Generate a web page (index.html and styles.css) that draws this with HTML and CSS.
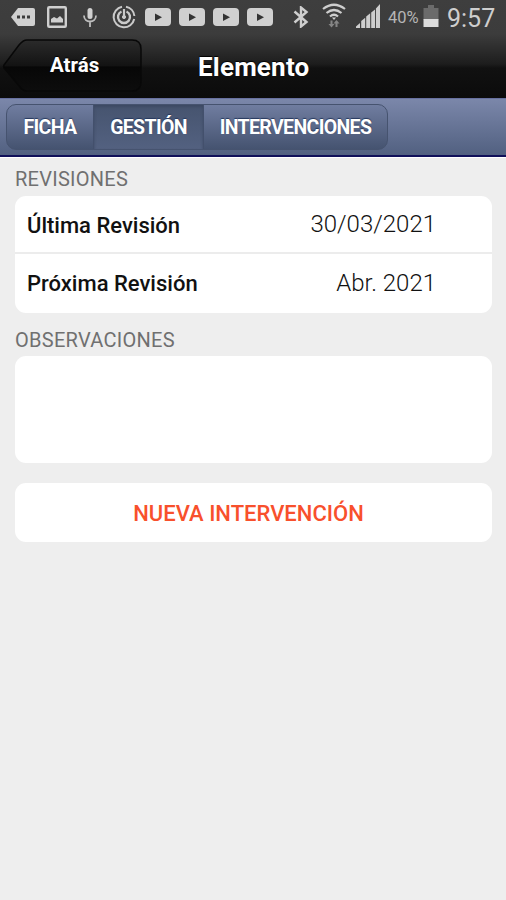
FILE: index.html
```html
<!DOCTYPE html>
<html lang="es">
  <head>
    <meta charset="utf-8">
    <title>Elemento</title>
    <link rel="stylesheet" href="styles.css">
  </head>
  <body>
    <header class="top">
      <div class="status-bar">
        <svg class="icon-more" width="24" height="18" viewBox="0 0 24 18">
          <path d="M7 0h15q2 0 2 2v14q0 2-2 2H7L0 9z" fill="#d0d0d0"/>
          <path d="M6 7.5h3v3H6zM11 7.5h3v3h-3zM16 7.5h3v3h-3z" fill="#3c3c3c"/>
        </svg>
        <svg class="icon-image" width="20" height="22" viewBox="0 0 20 22">
          <rect x="1.2" y="1.2" width="17.6" height="19.6" rx="1" fill="none" stroke="#cfcfcf" stroke-width="2.4"/>
          <path d="M4 16.5V13l3-2 3 1.5 3-2.500 3 3v3.500z" fill="#cfcfcf"/>
        </svg>
        <svg class="icon-mic" width="14" height="19" viewBox="0 0 14 19">
          <rect x="4.5" y="0" width="5" height="11" rx="2.5" fill="#d0d0d0"/>
          <path d="M1 7.5c0 8 12 8 12 0M7 13.5V19" fill="none" stroke="#bdbdbd" stroke-width="1.8"/>
        </svg>
        <svg class="icon-ring" width="24" height="24" viewBox="0 0 24 24" fill="none" stroke="#cacaca">
          <path d="M10 1.7A10.4 10.4 0 1 0 22.2 14M22.4 11A10.4 10.4 0 0 0 14 1.7" stroke-width="2"/>
          <path d="M9.5 6.5a6 6 0 1 0 5 0" stroke-width="2.4"/>
          <path d="M12 4v8" stroke-width="2.2"/>
          <circle cx="12" cy="12" r="1.6" fill="#cacaca"/>
        </svg>
        <svg class="icon-video first" width="26" height="18" viewBox="0 0 26 18">
          <rect width="26" height="18" rx="4" fill="#d0d0d0"/><path d="M10 5.5l7 3.7-7 3.7z" fill="#333"/>
        </svg>
        <svg class="icon-video" width="26" height="18" viewBox="0 0 26 18">
          <rect width="26" height="18" rx="4" fill="#d0d0d0"/><path d="M10 5.5l7 3.7-7 3.7z" fill="#333"/>
        </svg>
        <svg class="icon-video" width="26" height="18" viewBox="0 0 26 18">
          <rect width="26" height="18" rx="4" fill="#d0d0d0"/><path d="M10 5.5l7 3.7-7 3.7z" fill="#333"/>
        </svg>
        <svg class="icon-video" width="26" height="18" viewBox="0 0 26 18">
          <rect width="26" height="18" rx="4" fill="#d0d0d0"/><path d="M10 5.5l7 3.7-7 3.7z" fill="#333"/>
        </svg>
        <svg class="icon-bluetooth" width="16" height="22" viewBox="0 0 16 22">
          <path d="M1.5 5.5l12 10.5L8 20.5v-19L13.5 6l-12 10.5" fill="none" stroke="#cecece" stroke-width="2.4"/>
        </svg>
        <svg class="icon-wifi" width="24" height="25" viewBox="0 0 24 25">
          <path d="M1 6q11-8.500 22 0M4.500 10q7.500-6 15 0M8 13.500q4-3.500 8 0" fill="none" stroke="#cecece" stroke-width="2.2"/>
          <path d="M10 14.500h4l-2 2.500z" fill="#cecece"/>
          <path d="M9.500 17.500V22M14.500 24v-5.500" fill="none" stroke="#858585" stroke-width="2"/>
          <path d="M6.500 21h6l-3 3.500zM11.500 20.500h6l-3-3.500z" fill="#858585"/>
        </svg>
        <svg class="icon-signal" width="24" height="24" viewBox="0 0 24 24" fill="#cecece">
          <path d="M0 24v-1.500l4-3.500v5zM5.200 24v-7l4-3.200V24zM10.200 24V12.500l4-3.200V24zM15.200 24V8.500l3.800-3V24zM19.900 24V4.500L24 0v24z"/>
        </svg>
        <span class="battery-level">40%</span>
        <svg class="icon-battery" width="16" height="22" viewBox="0 0 16 22">
          <path d="M.5 3H5V0h6v3h4.500v12H.5z" fill="#6b6b6b"/>
          <path d="M.5 14h15v8H.5z" fill="#dcdcdc"/>
        </svg>
        <span class="clock">9:57</span>
      </div>
      <nav class="title-bar">
        <a class="back">
          <svg class="back-shape" width="140" height="54" viewBox="0 0 140 54">
            <defs>
              <linearGradient id="back-fill" x1="0" y1="0" x2="0" y2="1">
                <stop offset="0" stop-color="#2b2b2b"/>
                <stop offset=".5" stop-color="#131313"/>
                <stop offset=".53" stop-color="#070707"/>
                <stop offset="1" stop-color="#0d0d0d"/>
              </linearGradient>
            </defs>
            <path d="M25 1h105q9 0 9 9v33q0 9-9 9H25q-4 0-7-4L2 29q-1-1.500 0-3L17 6q4-5 8-5z" fill="url(#back-fill)" stroke="#080808" stroke-width="1.5"/>
          </svg>
          <span class="back-text">Atrás</span>
        </a>
        <h1>Elemento</h1>
      </nav>
    </header>

    <div class="tabs-bar">
      <ul class="tabs">
        <li class="tab tab-ficha"><span>FICHA</span></li>
        <li class="tab tab-gestion active"><span>GESTIÓN</span></li>
        <li class="tab tab-intervenciones"><span>INTERVENCIONES</span></li>
      </ul>
    </div>

    <main>
      <h2>REVISIONES</h2>
      <ul class="list">
        <li class="row"><span class="label">Última Revisión</span><span class="value">30/03/2021</span></li>
        <li class="row"><span class="label">Próxima Revisión</span><span class="value">Abr. 2021</span></li>
      </ul>
      <h2 class="notes-title">OBSERVACIONES</h2>
      <div class="notes"></div>
      <button class="new-button">NUEVA INTERVENCIÓN</button>
    </main>
  </body>
</html>
```

FILE: styles.css
```css
* {
  box-sizing: border-box;
}

body {
  margin: 0;
  min-height: 900px;
  background-color: #eee;
  font-family: Roboto, "Liberation Sans", sans-serif;
}

ul {
  list-style: none;
  margin: 0;
  padding: 0;
}

.top {
  height: 98px;
  background: linear-gradient(#3e3e3e 0, #3c3c3c 34px, #1d1d1d 64px, #111 68px, #0b0b0b 98px);
}

.status-bar {
  display: flex;
  align-items: center;
  height: 34px;
  padding-left: 11px;
  color: #cecece;
  white-space: nowrap;
}

.status-bar svg {
  flex: none;
}

.icon-image {
  margin-left: 12px;
}

.icon-mic {
  margin-left: 16px;
}

.icon-ring {
  margin-left: 15px;
}

.icon-video {
  margin-left: 8px;
}

.icon-video.first {
  margin-left: 9px;
}

.icon-bluetooth {
  margin-left: 20px;
}

.icon-wifi {
  margin-left: 13px;
  margin-bottom: 4px;
}

.icon-signal {
  margin-left: 10px;
  margin-bottom: 2px;
}

.battery-level {
  width: 35px;
  margin-left: 8px;
  font-size: 16.5px;
  color: #b5b5b5;
}

.icon-battery {
  margin-bottom: 2px;
}

.clock {
  margin-left: 8px;
  padding-top: 2px;
  font-size: 25px;
}

.title-bar {
  display: flex;
  height: 64px;
  padding: 5px 0 0 2px;
}

.back {
  position: relative;
  width: 140px;
  height: 54px;
}

.back-shape {
  display: block;
}

.back-text {
  position: absolute;
  left: 48px;
  top: 14px;
  font-size: 20.5px;
  line-height: 24px;
  font-weight: bold;
  color: #fff;
  text-shadow: 0 -1px 1px #000;
}

h1 {
  margin: 13px 0 0 56px;
  font-size: 26px;
  line-height: 30px;
  font-weight: bold;
  letter-spacing: 0.2px;
  color: #fff;
  text-shadow: 0 -1px 1px #000;
}

.tabs-bar {
  height: 60px;
  padding: 5px 6px;
  border-top: 1px solid #6770a0;
  border-bottom: 1px solid #fff;
  background: linear-gradient(#7b87aa, #505f7f);
  box-shadow: inset 0 -2px 0 #10105a;
}

.tabs {
  display: flex;
  width: 382px;
  height: 46px;
  border: 1px solid #46536f;
  border-radius: 10px;
  background: linear-gradient(#707da0, #455370);
  overflow: hidden;
}

.tab {
  display: flex;
  align-items: center;
  justify-content: center;
  font-size: 19.5px;
  font-weight: bold;
  letter-spacing: -0.65px;
  color: #fff;
  text-shadow: 0 -1px 1px #26385e;
}

.tab-ficha {
  width: 86px;
}

.tab-gestion {
  width: 110px;
  border-left: 1px solid #43506c;
}

.tab-intervenciones {
  width: 184px;
  border-left: 1px solid #43506c;
}

.tab.active {
  background: linear-gradient(#46546f, #536180);
  box-shadow: inset 0 2px 3px #3d4963;
}

main {
  padding: 9px 15px 0;
}

h2 {
  margin: 0;
  height: 29px;
  font-size: 20px;
  line-height: 24px;
  font-weight: normal;
  letter-spacing: 0.27px;
  color: #707070;
}

.list,
.notes,
.new-button {
  width: 477px;
  border-radius: 11px;
  background-color: #fff;
}

.row {
  display: flex;
  align-items: center;
  justify-content: space-between;
  height: 59px;
  padding: 0 56px 2px 12px;
}

.row:first-child {
  height: 58px;
  padding-bottom: 0;
  border-bottom: 2px solid #ececec;
}

.label {
  padding-top: 2px;
  font-size: 22px;
  font-weight: 500;
  color: #111;
}

.value {
  font-size: 24px;
  font-weight: 300;
  color: #111;
}

.notes-title {
  height: 28px;
  margin-top: 15px;
}

.notes {
  height: 107px;
}

.new-button {
  display: block;
  height: 59px;
  margin-top: 20px;
  padding: 2px 10px 0 0;
  border: 0;
  font-family: inherit;
  font-size: 22px;
  font-weight: 500;
  color: #f8502c;
}
```
